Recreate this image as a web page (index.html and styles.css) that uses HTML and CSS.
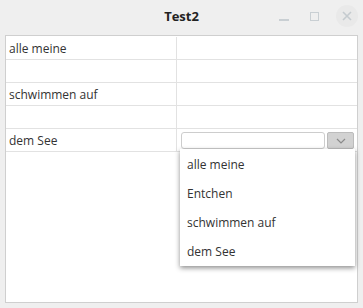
FILE: index.html
```html
<!DOCTYPE html>
<html lang="en">
<head>
    <meta charset="UTF-8">
    <title>Test2</title>
    <link rel="stylesheet" href="styles.css">
</head>
<body>
    <div class="window">
        <div class="titlebar">
            <span class="title">Test2</span>
            <div class="controls">
                <span class="btn-min"></span>
                <span class="btn-max"></span>
                <span class="btn-close">
                    <svg width="10" height="10" viewBox="0 0 10 10"><path d="M1 1L9 9M9 1L1 9" stroke="#c5cbcf" stroke-width="1.6"/></svg>
                </span>
            </div>
        </div>
        <div class="table">
            <div class="row"><div class="cell">alle meine</div><div class="cell"></div></div>
            <div class="row"><div class="cell"></div><div class="cell"></div></div>
            <div class="row"><div class="cell">schwimmen auf</div><div class="cell"></div></div>
            <div class="row"><div class="cell"></div><div class="cell"></div></div>
            <div class="row">
                <div class="cell">dem See</div>
                <div class="cell combo-cell">
                    <div class="combo">
                        <div class="combo-input"></div>
                        <div class="combo-btn">
                            <svg width="10" height="6" viewBox="0 0 10 6"><path d="M1 1L5 5L9 1" fill="none" stroke="#8a8a8a" stroke-width="1.2"/></svg>
                        </div>
                    </div>
                    <div class="popup">
                        <div class="item">alle meine</div>
                        <div class="item">Entchen</div>
                        <div class="item">schwimmen auf</div>
                        <div class="item">dem See</div>
                    </div>
                </div>
            </div>
        </div>
    </div>
</body>
</html>
```
FILE: styles.css
```css
body {
    margin: 0;
    background: #efefef;
    font-family: "Open Sans", sans-serif;
    font-size: 12px;
    color: #333;
}
.window {
    width: 363px;
    height: 308px;
    display: flex;
    flex-direction: column;
}
.titlebar {
    height: 35px;
    position: relative;
    display: flex;
    align-items: center;
    justify-content: center;
}
.title {
    font-weight: bold;
    font-size: 13px;
    color: #222;
    margin-top: -4px;
}
.controls {
    position: absolute;
    right: 0;
    top: 0;
    height: 35px;
    display: flex;
    align-items: center;
}
.btn-min {
    width: 10px;
    height: 2px;
    background: #c9cfd3;
    margin-right: 21px;
    margin-top: 4px;
}
.btn-max {
    width: 7px;
    height: 7px;
    border: 1.5px solid #c9cfd3;
    margin-right: 17px;
    margin-top: -3px;
}
.btn-close {
    width: 22px;
    height: 22px;
    border-radius: 50%;
    background: #e9e9e9;
    display: flex;
    align-items: center;
    justify-content: center;
    margin-right: 5px;
    margin-top: -3px;
}
.table {
    margin: 0 5px 5px 5px;
    padding-top: 1px;
    flex: 1;
    background: #fff;
    border: 1px solid #cfcfcf;
}
.row {
    display: flex;
    height: 22px;
    border-bottom: 1px solid #e2e2e2;
}
.cell {
    padding-left: 3px;
    line-height: 23px;
}
.cell:first-child {
    width: 167px;
    border-right: 1px solid #e2e2e2;
}
.combo-cell {
    position: relative;
    flex: 1;
    padding: 0;
}
.combo {
    display: flex;
    margin: 3px 0 0 4px;
    height: 17px;
}
.combo-input {
    width: 142px;
    height: 15px;
    border: 1px solid #cdcdcd;
    border-radius: 3px;
    background: #fff;
}
.combo-btn {
    width: 25px;
    height: 15px;
    margin-left: 2px;
    border: 1px solid #bcbcbc;
    border-radius: 2px;
    background: #d2d2d2;
    display: flex;
    align-items: center;
    justify-content: center;
}
.popup {
    position: absolute;
    left: 3px;
    top: 20px;
    width: 175px;
    padding-top: 1px;
    background: #fff;
    box-shadow: 0 2px 5px rgba(0, 0, 0, 0.45);
    z-index: 2;
}
.item {
    height: 29px;
    line-height: 29px;
    padding-left: 7px;
}
```
